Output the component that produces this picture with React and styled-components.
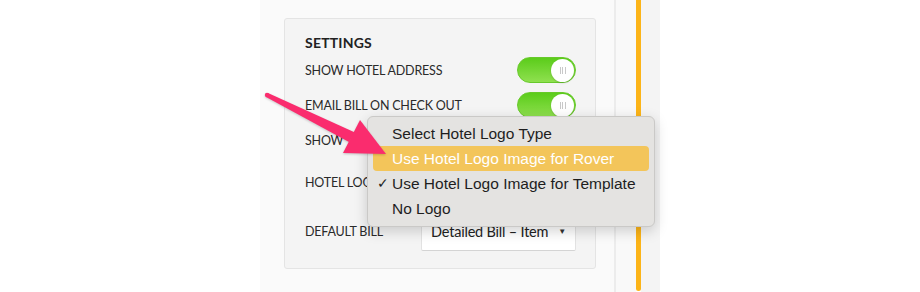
import React from "react";
import styled, { createGlobalStyle } from "styled-components";

const GlobalStyle = createGlobalStyle`
  html, body { margin: 0; padding: 0; background: #ffffff; }
  body { font-family: Lato, "Open Sans", sans-serif; }
`;

const Page = styled.div`
  position: relative;
  display: flex;
  width: 920px;
  height: 292px;
  overflow: hidden;
  background: #ffffff;
`;

const Spacer = styled.div`
  width: 260px;
  flex: none;
`;

const Panel = styled.div`
  width: 354px;
  flex: none;
  background: #fafafa;
  padding: 18px 18px 0 24px;
  box-sizing: border-box;
`;

const Divider = styled.div`
  width: 2px;
  flex: none;
  background: #ececec;
`;

const Gutter = styled.div`
  width: ${(p) => p.$w}px;
  flex: none;
  background: ${(p) => p.$bg};
`;

const Rail = styled.div`
  width: 5px;
  flex: none;
  height: 291px;
  background: #fcb418;
  border-radius: 0 0 3px 3px;
`;

const Card = styled.div`
  width: 312px;
  height: 251px;
  box-sizing: border-box;
  background: #f4f4f4;
  border: 1px solid #e4e4e4;
  border-radius: 3px;
  padding: 13px 19px 0 20px;
  display: flex;
  flex-direction: column;
`;

const Title = styled.div`
  font-size: 14px;
  font-weight: 700;
  line-height: 22px;
  color: #222;
  letter-spacing: 0.2px;
`;

const Row = styled.div`
  display: flex;
  align-items: center;
  justify-content: space-between;
  height: ${(p) => p.$h}px;
  margin-top: ${(p) => p.$gap}px;
`;

const Label = styled.span`
  font-size: 12.5px;
  letter-spacing: -0.2px;
  color: #2a2a2a;
  white-space: nowrap;
`;

const Toggle = styled.div`
  width: 59px;
  height: 26px;
  box-sizing: border-box;
  border-radius: 13px;
  background: linear-gradient(180deg, #5bcc1a 0%, #8fe04f 100%);
  border: 1px solid #67c92a;
  display: flex;
  align-items: center;
  justify-content: flex-end;
  padding-right: 1px;
`;

const Knob = styled.div`
  width: 23px;
  height: 23px;
  border-radius: 50%;
  background: #fff;
  box-shadow: 0 1px 2px rgba(0, 0, 0, 0.15);
  display: flex;
  align-items: center;
  justify-content: center;
  gap: 1.5px;
`;

const Grip = styled.span`
  width: 1px;
  height: 7px;
  background: #c8c8c8;
`;

const Select = styled.div`
  width: 155px;
  height: ${(p) => p.$h}px;
  box-sizing: border-box;
  background: #fff;
  border: 1px solid #e2e2e2;
  border-bottom-color: #d4d4d4;
  border-radius: 2px;
  display: flex;
  align-items: center;
  justify-content: space-between;
  padding: 0 9px 0 9px;
  font-size: 14.5px;
  letter-spacing: -0.2px;
  color: #222;
`;

const Caret = styled.span`
  font-size: 8px;
  color: #333;
`;

const Menu = styled.div`
  position: absolute;
  left: 367px;
  top: 116px;
  width: 288px;
  height: 111px;
  box-sizing: border-box;
  background: #e4e3e1;
  border: 1px solid #cac9c7;
  border-radius: 6px;
  box-shadow: 0 4px 14px rgba(0, 0, 0, 0.18);
  padding: 4px 5px 5px 5px;
  display: flex;
  flex-direction: column;
  font-family: "Liberation Sans", Arial, sans-serif;
`;

const Item = styled.div`
  position: relative;
  height: 25px;
  line-height: 25px;
  border-radius: 4px;
  padding-left: 19px;
  font-size: 15.5px;
  color: ${(p) => (p.$active ? "#ffffff" : "#1e1e1e")};
  background: ${(p) => (p.$active ? "#f3c55a" : "transparent")};
`;

const Check = styled.span`
  position: absolute;
  left: 4px;
  top: 0;
  font-size: 14px;
`;

const Overlay = styled.svg`
  position: absolute;
  left: 0;
  top: 0;
  pointer-events: none;
  filter: drop-shadow(0 1px 1px rgba(0, 0, 0, 0.2));
`;

export default function App() {
  return (
    <>
      <GlobalStyle />
      <Page>
        <Spacer />
        <Panel>
          <Card>
            <Title>SETTINGS</Title>
            <Row $h={26} $gap={3}>
              <Label>SHOW HOTEL ADDRESS</Label>
              <Toggle>
                <Knob>
                  <Grip />
                  <Grip />
                  <Grip />
                </Knob>
              </Toggle>
            </Row>
            <Row $h={26} $gap={9}>
              <Label>EMAIL BILL ON CHECK OUT</Label>
              <Toggle>
                <Knob>
                  <Grip />
                  <Grip />
                  <Grip />
                </Knob>
              </Toggle>
            </Row>
            <Row $h={26} $gap={9}>
              <Label>SHOW</Label>
            </Row>
            <Row $h={38} $gap={10}>
              <Label>HOTEL LOGO</Label>
              <Select $h={38} />
            </Row>
            <Row $h={40} $gap={10}>
              <Label>DEFAULT BILL</Label>
              <Select $h={40}>
                <span>Detailed Bill – Item</span>
                <Caret>▼</Caret>
              </Select>
            </Row>
          </Card>
        </Panel>
        <Divider />
        <Gutter $w={20} $bg="#f9f9f9" />
        <Rail />
        <Gutter $w={19} $bg="#f4f4f4" />
        <Menu>
          <Item>Select Hotel Logo Type</Item>
          <Item $active>Use Hotel Logo Image for Rover</Item>
          <Item>
            <Check>✓</Check>Use Hotel Logo Image for Template
          </Item>
          <Item>No Logo</Item>
        </Menu>
        <Overlay width="920" height="292" viewBox="0 0 920 292">
          <g fill="#fa2c6e">
            <circle cx="267" cy="95" r="2.2" />
            <polygon points="268,93 266,97 349,142 355,132.5" />
            <polygon points="360,120 386,154 343,153" />
          </g>
        </Overlay>
      </Page>
    </>
  );
}
